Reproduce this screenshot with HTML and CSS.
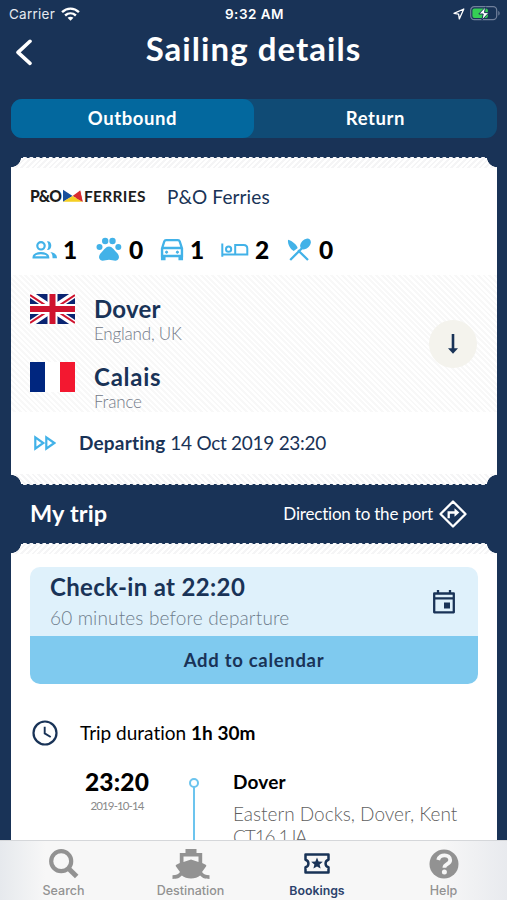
FILE: index.html
```html
<!DOCTYPE html>
<html lang="en">
<head>
<meta charset="utf-8">
<title>Sailing details</title>
<link rel="stylesheet" href="styles.css">
</head>
<body>
<div class="screen">
  <header class="status">
    <div class="status-left"><span>Carrier</span>
      <svg class="wifi" viewBox="0 0 18 13" fill="none" stroke="#fff" stroke-width="2.3"><path d="M1 4.7C5.7.3 12.3.3 17 4.7"/><path d="M3.9 7.9c3-2.7 7.2-2.7 10.2 0"/><path d="M6.2 10.1c1.7-1.4 3.9-1.4 5.6 0L9 13z" fill="#fff" stroke="none"/></svg>
    </div>
    <strong class="clock">9:32 AM</strong>
    <div class="status-right">
      <svg class="locate" viewBox="0 0 12 12" fill="none" stroke="#fff" stroke-width="1.3" stroke-linejoin="round"><path d="M10.8 1 1 5.3l4.6.8.7 4.8z"/></svg>
      <svg class="battery" viewBox="0 0 30 15"><rect x=".7" y=".7" width="26" height="13" rx="3.6" fill="none" stroke="#71809b" stroke-width="1.2"/><path d="M28.3 5v4.6c1.8-.7 1.8-3.9 0-4.6z" fill="#71809b"/><rect x="2.4" y="2.4" width="15.5" height="9.6" rx="2" fill="#35cf55"/><path d="M15.6.8 8.800 8h4.400l-1.400 6.200L19 6.600h-4.500z" fill="#fff" stroke="#193357" stroke-width="1"/></svg>
    </div>
  </header>
  <div class="navbar">
    <svg class="back" viewBox="0 0 18 27" fill="none" stroke="#fff" stroke-width="3.6" stroke-linecap="round" stroke-linejoin="round"><path d="M15 2.3 3 13.4 15 24.4"/></svg>
    <h1>Sailing details</h1>
  </div>
  <nav class="segments"><span class="segment active">Outbound</span><span class="segment">Return</span></nav>

  <section class="ticket sailing">
    <div class="edge top"></div>
    <div class="operator">
      <svg class="logo" viewBox="0 0 116 15">
        <text x="0" y="13" class="logo-po" textLength="31" lengthAdjust="spacingAndGlyphs">P&amp;O</text>
        <path d="M33 1 43 7l8-6 2.500 11.800H33z" fill="#f5f5f5"/><path d="M33 .8v12L42.600 7z" fill="#174f9c"/><path d="m42.600 7 7.500-5.500L52.500 12.700z" fill="#d92b2f"/><path d="M33 12.800 42.600 7l9.900 5.800z" fill="#f6cf22"/><path d="m46 9 4.100-7.500 2.600 11.300z" fill="#d92b2f"/>
        <text x="54" y="12.700" class="logo-fe" textLength="61.500">FERRIES</text>
      </svg>
      <span class="operator-name">P&amp;O Ferries</span>
    </div>
    <ul class="counts">
      <li class="c1"><svg viewBox="0 0 26 20" fill="none" stroke="#42b2e8" stroke-width="2.200"><circle cx="9" cy="5.800" r="3.700"/><path d="M1.600 17.300c0-5.500 14.600-5.500 14.600 0z"/><path d="M15 1.200c5.700-.8 5.700 9.400 0 8.900 1.900-2.800 1.900-6 0-8.900zM18.200 12.100c4.300.4 6.800 2.600 6.800 6.200h-4.500c.2-2.600-.4-4.600-2.300-6.200z" fill="#42b2e8" stroke="none"/></svg><b>1</b></li>
      <li class="c2"><svg viewBox="0 0 26 25" fill="#42b2e8"><circle cx="3.500" cy="9.900" r="3"/><circle cx="9.200" cy="4" r="3.200"/><circle cx="16.500" cy="4" r="3.200"/><circle cx="22.300" cy="9.900" r="3"/><path d="M13 9.500c3.200 0 4.800 3.300 7.400 5.800 2.300 2.300 3.300 4.500 2 6.800-1.800 3-5.700.7-9.400.7s-7.600 2.300-9.400-.7c-1.300-2.300-.3-4.500 2-6.800C8.200 12.800 9.800 9.500 13 9.500z"/></svg><b>0</b></li>
      <li class="c3"><svg viewBox="0 0 24 22" fill="none" stroke="#42b2e8" stroke-width="2.300"><path d="M2 9.500 4.300 2.400C4.600 1.500 5.200 1.200 6 1.200h12c.8 0 1.400.3 1.700 1.200L22 9.500v7.500H2zM2.500 9h19M2.100 10v10h2.300v-2.500m17.500-7.500v10h-2.300v-2.500"/><circle cx="6.600" cy="13.200" r="1.100" fill="#42b2e8" stroke-width="1"/><circle cx="17.400" cy="13.200" r="1.100" fill="#42b2e8" stroke-width="1"/></svg><b>1</b></li>
      <li class="c4"><svg viewBox="0 0 28 16" fill="none" stroke="#42b2e8" stroke-width="2"><path d="M1.300 1.500v13.300M1.300 12.500h25M26.300 13.500V6.500c0-2.300-1.300-3.600-3.600-3.600h-8.500v9.600"/><circle cx="7.600" cy="7.200" r="2.600"/></svg><b>2</b></li>
      <li class="c5"><svg viewBox="0 0 24 24"><path d="m3.200 22 12-12M21 22 11 12.200" stroke="#42b2e8" stroke-width="2.300" fill="none"/><path d="M1 1.700c4 .8 10.200 6.300 9.500 8.600L6.700 13C2.800 10.700.5 5.800 1 1.700z" fill="#42b2e8"/><ellipse cx="18.500" cy="6" rx="6.200" ry="4.400" transform="rotate(-45 18.500 6)" fill="#42b2e8"/></svg><b>0</b></li>
    </ul>
    <div class="route">
      <div class="ports">
        <div class="port">
          <svg class="flag" viewBox="0 0 45 30"><path fill="#0a2472" d="M0 0h45v30H0z"/><path d="m0 0 45 30M45 0 0 30" stroke="#fff" stroke-width="6.500"/><path d="m0 1 19 12.700M26 16.300 45 29M45 1 26 13.700M19 16.300 0 29" stroke="#cf142f" stroke-width="2"/><path d="M22.500 0v30M0 15h45" stroke="#fff" stroke-width="10"/><path d="M22.500 0v30M0 15h45" stroke="#cf142f" stroke-width="6"/></svg>
          <div><h2>Dover</h2><p>England, UK</p></div>
        </div>
        <div class="port">
          <svg class="flag" viewBox="0 0 45 30"><path fill="#00267f" d="M0 0h15v30H0z"/><path fill="#fff" d="M15 0h15v30H15z"/><path fill="#f31830" d="M30 0h15v30H30z"/></svg>
          <div><h2 class="wide">Calais</h2><p>France</p></div>
        </div>
      </div>
      <div class="swap"><svg viewBox="0 0 12 22"><path d="M6 1v17" stroke="#193357" stroke-width="2.600"/><path d="M1 15.200h10L6 20.700z" fill="#193357"/></svg></div>
    </div>
    <div class="departing">
      <svg viewBox="0 0 22 16" fill="none" stroke="#42b2e8" stroke-width="2.200"><path d="M1.300 2.400v11.200l8-5.600zM12.300 2.400v11.200l8-5.600z"/></svg>
      <p><b>Departing</b> <span>14 Oct 2019 23:20</span></p>
    </div>
    <div class="edge bottom"></div>
  </section>

  <div class="trip-head">
    <h2>My trip</h2>
    <div class="direction"><span>Direction to the port</span>
      <svg viewBox="0 0 28 28" fill="none" stroke="#fff" stroke-width="2.300" stroke-linejoin="round"><path d="M14 1.500 26.500 14 14 26.500 1.500 14z"/><path d="M9.700 18.300v-5.800h7" stroke-linejoin="miter"/><path d="m15.500 8.300 4.800 4.200-4.800 4.200z" fill="#fff" stroke="none"/></svg>
    </div>
  </div>

  <section class="ticket trip">
    <div class="edge top"></div>
    <div class="checkin">
      <div class="checkin-info">
        <div><h2>Check-in at 22:20</h2><p>60 minutes before departure</p></div>
        <svg viewBox="0 0 24 26"><path d="M2.200 4.500h19.600v18.800H2.200z" fill="none" stroke="#193357" stroke-width="2.300" stroke-linejoin="round"/><path d="M2 9.300h20M6 1v3.500M18 1v3.500" stroke="#193357" stroke-width="2.300"/><path d="M12 13.500h6v6h-6z" fill="#193357"/></svg>
      </div>
      <div class="add">Add to calendar</div>
    </div>
    <div class="duration">
      <svg viewBox="0 0 26 26" fill="none" stroke="#193357" stroke-width="2.200"><circle cx="13" cy="13" r="11.500"/><path d="M12.700 6.700v6.700l6 3.600" stroke-width="1.900"/></svg>
      <p>Trip duration <b>1h 30m</b></p>
    </div>
    <div class="leg">
      <div class="leg-time"><b>23:20</b><span>2019-10-14</span></div>
      <div class="leg-line"><i></i></div>
      <div class="leg-place"><h3>Dover</h3><p>Eastern Docks, Dover, Kent<br><span class="postcode">CT16 1JA</span></p></div>
    </div>
  </section>

  <nav class="tabbar">
    <div class="tab"><svg viewBox="0 0 30 30"><circle cx="12.200" cy="12.200" r="10" fill="none" stroke="#929292" stroke-width="4.200"/><path d="m19.500 19.500 8.200 8" stroke="#929292" stroke-width="5"/></svg><span>Search</span></div>
    <div class="tab"><svg class="ship" viewBox="0 0 38 30" fill="#929292"><path d="M13.500 4V0h11v4h5.700v10l3.500 1.700c.7.400.8 1 .3 1.700L30 23c1.600 2.400 3.800 3.300 7.500 3.300V30c-4.800 0-7-.9-9.400-3.400C24 30.500 14 30.500 9.900 26.600 7.500 29.100 5.300 30 .5 30v-3.700c3.700 0 5.900-.9 7.500-3.300l-4-5.600c-.5-.7-.4-1.300.3-1.700L7.800 14V4zm-2 3.500V13L19 10.500l7.500 2.500V7.500z"/></svg><span>Destination</span></div>
    <div class="tab current"><svg class="coupon" viewBox="0 0 26 21"><path d="M1.500 1.500h23v5.200c-3.900 1-3.900 6.600 0 7.600v5.200h-23v-5.200c3.900-1 3.900-6.600 0-7.600z" fill="none" stroke="#193357" stroke-width="2.500" stroke-linejoin="round"/><path d="m13 4.600 1.600 3.900 4.200.3-3.200 2.700 1 4.100-3.600-2.200-3.600 2.200 1-4.100-3.200-2.700 4.200-.3z" fill="#193357"/></svg><span>Bookings</span></div>
    <div class="tab"><svg viewBox="0 0 30 30"><circle cx="15" cy="15" r="14.500" fill="#929292"/><path d="M9.200 11c1.300-6.400 12-6.100 12 .1 0 4.500-5.800 3.700-5.800 7.600" fill="none" stroke="#f6f6f6" stroke-width="3.800"/><circle cx="15.400" cy="23.100" r="2.500" fill="#f6f6f6"/></svg><span>Help</span></div>
  </nav>
</div>
</body>
</html>
```
FILE: styles.css
```css
* { box-sizing: border-box; margin: 0; padding: 0; }
body { font-family: Lato, sans-serif; color: #193357; background: #193357; font-variant-ligatures: none; }
svg { display: block; flex: none; }
.screen { width: 507px; height: 900px; overflow: hidden; display: flex; flex-direction: column; background: #193357; }

.status { height: 28px; flex: none; display: grid; grid-template-columns: 1fr auto 1fr; align-items: center; padding: 0 7px 0 9px; font: 400 13.5px Inter, sans-serif; color: #e6eaf0; }
.status-left, .status-right { display: flex; align-items: center; padding-bottom: 1px; }
.status-left { gap: 6px; letter-spacing: .25px; }
.status-right { justify-content: flex-end; gap: 5px; }
.clock { font-weight: 600; font-size: 13.5px; letter-spacing: .5px; color: #fff; }
.wifi { width: 19px; height: 14px; }
.locate { width: 12px; height: 12px; }
.battery { width: 30px; height: 15px; }

.navbar { height: 71px; flex: none; display: grid; grid-template-columns: 30px 1fr 30px; padding: 0 15px; }
.back { width: 18px; height: 27px; margin-top: 11px; }
h1 { text-align: center; font-size: 33px; line-height: 40px; font-weight: 700; letter-spacing: 1.05px; color: #fff; }

.segments { height: 39px; flex: none; display: flex; margin: 0 10px 0 11px; background: #104b75; border-radius: 11px; }
.segment { flex: 1; text-align: center; font-size: 18.5px; font-weight: 700; line-height: 38px; letter-spacing: .6px; color: #fff; }
.segment.active { background: #03689e; border-radius: 11px; }

.ticket { margin: 0 10px 0 11px; flex: none; display: flex; flex-direction: column; background: #fff; }
.sailing { height: 328px; margin-top: 19px; }
.trip { flex: 1 1 0; min-height: 0; overflow: hidden; }
.edge { height: 11px; flex: none; }
.edge.top { background:
  radial-gradient(circle at 0 0, #193357 9.7px, transparent 10.3px) left / 50% 100% no-repeat,
  radial-gradient(circle at 100% 0, #193357 9.7px, transparent 10.3px) right / 50% 100% no-repeat,
  radial-gradient(ellipse 2px 1.5px at 50% 0, #193357 80%, transparent) 1px 0 / 6.46px 2px repeat-x,
  repeating-linear-gradient(135deg, #fff 0 2px, #f5f5f6 2px 4px); }
.edge.bottom { margin-top: auto; background:
  radial-gradient(circle at 0 100%, #193357 9.7px, transparent 10.3px) left / 50% 100% no-repeat,
  radial-gradient(circle at 100% 100%, #193357 9.7px, transparent 10.3px) right / 50% 100% no-repeat,
  radial-gradient(ellipse 2px 1.5px at 50% 100%, #193357 80%, transparent) 1px 100% / 6.46px 2px repeat-x,
  repeating-linear-gradient(45deg, #fff 0 2px, #f5f5f6 2px 4px); }

.operator { height: 57px; display: flex; align-items: center; padding-left: 19px; gap: 21px; }
.logo { width: 116px; height: 15px; overflow: visible; }
.logo text { fill: #1d1d1d; font-family: Lato, sans-serif; }
.logo .logo-po { font-size: 17px; font-weight: 900; letter-spacing: -1px; }
.logo .logo-fe { font-size: 15.5px; font-weight: 700; }
.operator-name { font-size: 19px; line-height: 22px; letter-spacing: .12px; }

.counts { list-style: none; height: 49px; display: grid; grid-template-columns: 64px 64px 61px 66px 60px; align-items: center; padding-left: 21px; }
.counts li { display: flex; align-items: center; gap: 5px; }
.counts b { font-size: 24.5px; line-height: 28px; color: #000; font-weight: 900; }
.c1 svg { width: 26px; height: 20px; }
.c2 svg { width: 26px; height: 25px; }
.c3 svg { width: 24px; height: 22px; }
.c4 svg { width: 28px; height: 16px; }
.c5 svg { width: 24px; height: 24px; }
.counts .c2 { gap: 7px; }
.counts .c3, .counts .c4 { gap: 6px; }
.counts .c5 { gap: 8px; }

.route { height: 137px; margin-top: 1px; display: flex; justify-content: space-between; align-items: center; padding: 0 20px 0 19px; background: repeating-linear-gradient(45deg, #fff 0 2px, #f8f8f8 2px 4px); }
.port { height: 68px; display: flex; gap: 19px; align-items: flex-start; }
.flag { width: 45px; height: 30px; margin-top: 18px; }
.port h2 { margin-top: 18px; font-size: 24px; line-height: 30px; letter-spacing: .2px; }
.port h2.wide { letter-spacing: .75px; }
.port p { font-size: 17px; line-height: 20px; font-weight: 300; letter-spacing: -.2px; color: #737a88; }
.swap { width: 48px; height: 48px; border-radius: 50%; background: #f4f3ed; display: grid; place-items: center; }
.swap svg { width: 12px; height: 22px; }

.departing { height: 61px; display: flex; align-items: center; padding-left: 23px; gap: 23px; font-size: 19px; }
.departing svg { width: 22px; height: 16px; }
.departing b { letter-spacing: .2px; }
.departing span { letter-spacing: -.28px; }

.trip-head { height: 58px; flex: none; display: flex; align-items: center; justify-content: space-between; padding: 0 40px 1px 30px; color: #fff; }
.trip-head h2 { font-size: 23.5px; letter-spacing: .15px; padding-bottom: 1px; }
.direction { display: flex; align-items: center; gap: 6px; font-size: 17px; letter-spacing: -.2px; }
.direction svg { width: 28px; height: 28px; }

.checkin { flex: none; margin: 13px 19px 0; border-radius: 10px; overflow: hidden; }
.checkin-info { height: 69px; display: flex; justify-content: space-between; align-items: center; padding: 0 22px 0 20px; background: #dff1fb; }
.checkin-info h2 { font-size: 24px; line-height: 30px; letter-spacing: .35px; margin-top: 2px; }
.checkin-info p { font-size: 19px; line-height: 32px; font-weight: 300; letter-spacing: .15px; color: #6e7d8c; }
.checkin-info svg { width: 24px; height: 26px; }
.add { height: 48px; text-align: center; font-size: 18.5px; line-height: 48px; font-weight: 700; letter-spacing: .7px; background: #7fcaef; }

.duration { flex: none; height: 26px; margin-top: 36px; padding-left: 21px; display: flex; align-items: center; gap: 22px; font-size: 19px; color: #000; }
.duration svg { width: 26px; height: 26px; }
.duration p { padding-bottom: 1px; }

.leg { flex: 1; min-height: 0; display: grid; grid-template-columns: 167px 32px 1fr; padding-top: 21px; color: #000; }
.leg-time { display: flex; flex-direction: column; align-items: center; padding-left: 45px; }
.leg-time b { font-size: 24.5px; line-height: 29px; font-weight: 900; letter-spacing: .2px; }
.leg-time span { font-size: 11.5px; line-height: 18px; margin-top: 1px; font-weight: 400; letter-spacing: -.9px; color: #898989; }
.leg-line { display: flex; justify-content: center; background: linear-gradient(#6cc4ee, #6cc4ee) 50% 17px / 2px 100% no-repeat; }
.leg-line i { width: 10px; height: 10px; margin-top: 11px; border: 2px solid #6cc4ee; border-radius: 50%; background: #fff; }
.leg-place { padding-left: 23px; }
.leg-place h3 { font-size: 19px; line-height: 24px; letter-spacing: .2px; margin-top: 3px; }
.leg-place p { font-size: 19px; line-height: 23px; margin-top: 8px; font-weight: 300; color: #5f5f5f; white-space: nowrap; }
.postcode { letter-spacing: -1.1px; }

.tabbar { height: 60px; flex: none; display: grid; grid-template-columns: 127px 127px 126px 127px; border-top: 1px solid #d5d7da; background: linear-gradient(90deg, #e6e9ed, #f7f7f7 9%, #f7f7f7 87%, #e8eaee); }
.tab { display: flex; flex-direction: column; align-items: center; color: #929292; font: 500 12.500px/16px Inter, sans-serif; }
.tab svg { width: 30px; height: 30px; margin-top: 8px; }
.tab .ship { width: 38px; }
.tab span { margin-top: 4px; }
.tab .coupon { width: 26px; height: 21px; margin: 12px 0 5px; }
.tab.current { color: #2b426c; font-weight: 600; font-size: 12.300px; }
```
